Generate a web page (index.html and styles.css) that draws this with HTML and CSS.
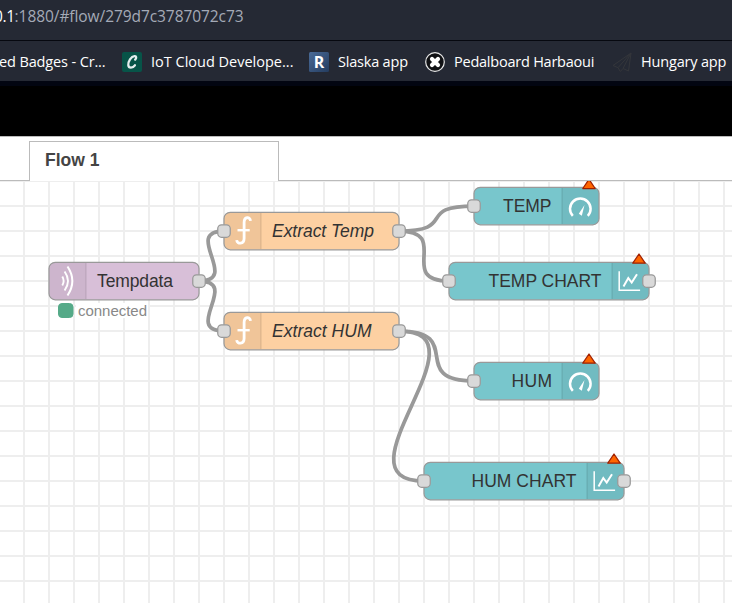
FILE: index.html
```html
<!DOCTYPE html>
<html lang="en">
<head>
<meta charset="utf-8">
<title>Node-RED</title>
<link rel="stylesheet" href="styles.css">
</head>
<body>
<div class="address"><span class="host">0.1</span><span class="path">:1880/#flow/279d7c3787072c73</span></div>
<nav class="bookmarks">
  <a class="bookmark first"><span class="name n-badges">ed Badges - Cr...</span></a>
  <a class="bookmark">
    <svg class="icon" viewBox="0 0 20 20"><rect width="20" height="20" rx="2" fill="#075448"/><path d="M13.2 7.6c1.5-1.5 1.3-3.7-.7-3.5-3.4.3-6.5 5.400-6.200 9 .3 3.400 4.500 3.200 6.600.2" fill="none" stroke="#e4eeee" stroke-width="2.300" stroke-linecap="round"/></svg>
    <span class="name n-iot">IoT Cloud Develope...</span></a>
  <a class="bookmark">
    <svg class="icon" viewBox="0 0 20 20"><defs><linearGradient id="blue" x2="1" y2="1"><stop stop-color="#4a6b98"/><stop offset="1" stop-color="#243c5f"/></linearGradient></defs><rect width="20" height="20" rx="1.500" fill="url(#blue)"/><text class="letter" x="4.800" y="16">R</text></svg>
    <span class="name n-slaska">Slaska app</span></a>
  <a class="bookmark">
    <svg class="icon" viewBox="0 0 20 20"><circle cx="10" cy="10" r="9.300" fill="#101114" stroke="#e8e8e8" stroke-width="1.200"/><path d="M7 7l6 6M13 7l-6 6" stroke="#fff" stroke-width="4.200" stroke-linecap="round"/></svg>
    <span class="name n-pedal">Pedalboard Harbaoui</span></a>
  <a class="bookmark">
    <svg class="icon" viewBox="0 0 20 20"><path d="M19 1L1 13.500l5 2.200L19 1l-2.500 18-5.500-2.500-2.700 3-2.300-3.800M11 16.500L19 1" fill="none" stroke="#34363b" stroke-width="1"/></svg>
    <span class="name n-hungary">Hungary app</span></a>
</nav>
<header class="masthead"></header>
<div class="tabs"><div class="spacer"></div><div class="tab">Flow 1</div><div class="rest"></div></div>
<main class="workspace">
<svg class="flow" viewBox="0 181 732 422">
  <defs>
    <pattern id="grid" x="23" y="180" width="25" height="25" patternUnits="userSpaceOnUse"><path d="M0 0H25V2H2V25H0Z" fill="#eee"/></pattern>
    <rect id="port" x="-6.250" y="-6.250" width="12.500" height="12.500" rx="3.750" class="port"/>
    <path id="alert" d="M0-4.700L6.200 4.500H-6.200Z" class="alert"/>
    <g id="function" class="glyph">
      <path d="M7-10.200C6.600-14.600.6-14.500.6-8.500V7.500C.6 13.400-6.400 13.400-6.800 9.200" stroke-width="2.800"/>
      <path d="M-6-.8H6.200" stroke-width="2.400"/>
    </g>
    <g id="gauge" class="glyph">
      <path d="M-7.500 8.600A10.300 10.300 0 1 1 7.500 8.600" stroke-width="2.500"/>
      <path d="M4.200-2.300L-1.500 6.500L1.500 8.400Z" class="solid"/>
    </g>
    <g id="chart" class="glyph">
      <path d="M-10.300-9.500V9.600H10.600" stroke-width="1.500"/>
      <path d="M-6 5.800L-1.200-2.600L2.200 1.800L7.500-6.500" stroke-width="2"/>
    </g>
    <g id="signal" class="glyph">
      <path d="M-3.700-4.500Q-1 0-3.700 4.500" stroke-width="1.900"/>
      <path d="M-1.400-9.500Q5.400 0-1.400 9.500" stroke-width="1.900"/>
      <path d="M1.500-14.500Q11.200 0 1.500 14.500" stroke-width="2"/>
    </g>
  </defs>
  <rect y="181" width="732" height="422" fill="url(#grid)"/>

  <g class="wires">
    <path d="M199 281C240.900 281 182.100 231 224 231"/>
    <path d="M199 281C240.900 281 182.100 331 224 331"/>
    <path d="M399 231C458.300 231 414.700 206 474 206"/>
    <path d="M399 231C452 231 396 281 449 281"/>
    <path d="M399 331C466.600 331 406.400 381 474 381"/>
    <path d="M399 331C492.750 331 330.250 481 424 481"/>
  </g>

  <g class="node mqtt">
    <rect class="body" x="49" y="262.250" width="150" height="37.500" rx="6.250"/>
    <path class="shade" d="M86 262.900V299.100H55.250A5.600 5.600 0 0 1 49.600 293.500V268.500A5.600 5.600 0 0 1 55.250 262.900Z"/><path class="divider" d="M86 263V299"/>
    <use href="#signal" x="66" y="281"/>
    <text x="97" y="287" textLength="76">Tempdata</text>
    <use href="#port" x="199" y="281"/>
    <rect class="status" x="58.500" y="303.500" width="14.500" height="14" rx="3.500"/>
    <rect x="76" y="303" width="72" height="15" fill="#fff"/>
    <text class="status-text" x="78" y="316" textLength="69">connected</text>
  </g>
  <g class="node function">
    <rect class="body" x="224" y="212.250" width="175" height="37.500" rx="6.250"/>
    <path class="shade" d="M261 212.900V249.100H230.250A5.600 5.600 0 0 1 224.600 243.500V218.500A5.600 5.600 0 0 1 230.250 212.900Z"/><path class="divider" d="M261 213V249"/>
    <use href="#function" x="243.500" y="231"/>
    <text x="272" y="237" textLength="102">Extract Temp</text>
    <use href="#port" x="224" y="231"/><use href="#port" x="399" y="231"/>
  </g>
  <g class="node function">
    <rect class="body" x="224" y="312.250" width="175" height="37.500" rx="6.250"/>
    <path class="shade" d="M261 312.900V349.100H230.250A5.600 5.600 0 0 1 224.600 343.500V318.500A5.600 5.600 0 0 1 230.250 312.900Z"/><path class="divider" d="M261 313V349"/>
    <use href="#function" x="243.500" y="331"/>
    <text x="272" y="337" textLength="99.500">Extract HUM</text>
    <use href="#port" x="224" y="331"/><use href="#port" x="399" y="331"/>
  </g>
  <g class="node ui">
    <rect class="body" x="474" y="187.250" width="125" height="37.500" rx="6.250"/>
    <path class="shade" d="M562 187.900V224.100H592.750A5.600 5.600 0 0 0 598.400 218.500V193.500A5.600 5.600 0 0 0 592.750 187.900Z"/><path class="divider" d="M562 188V224"/>
    <use href="#gauge" x="580.300" y="207.300"/>
    <text x="503" y="212" textLength="48.500">TEMP</text>
    <use href="#port" x="474" y="206"/><use href="#alert" x="589" y="184"/>
  </g>
  <g class="node ui">
    <rect class="body" x="449" y="262.250" width="200" height="37.500" rx="6.250"/>
    <path class="shade" d="M612 262.900V299.100H642.750A5.600 5.600 0 0 0 648.400 293.500V268.500A5.600 5.600 0 0 0 642.750 262.900Z"/><path class="divider" d="M612 263V299"/>
    <use href="#chart" x="629.500" y="280.700"/>
    <text x="488.500" y="287" textLength="113">TEMP CHART</text>
    <use href="#port" x="449" y="281"/><use href="#port" x="649" y="281"/><use href="#alert" x="639" y="258.700"/>
  </g>
  <g class="node ui">
    <rect class="body" x="474" y="362.250" width="125" height="37.500" rx="6.250"/>
    <path class="shade" d="M562 362.900V399.100H592.750A5.600 5.600 0 0 0 598.400 393.500V368.500A5.600 5.600 0 0 0 592.750 362.900Z"/><path class="divider" d="M562 363V399"/>
    <use href="#gauge" x="580.300" y="382.300"/>
    <text x="511.500" y="387" textLength="40.500">HUM</text>
    <use href="#port" x="474" y="381"/><use href="#alert" x="589" y="358.700"/>
  </g>
  <g class="node ui">
    <rect class="body" x="424" y="462.250" width="200" height="37.500" rx="6.250"/>
    <path class="shade" d="M587 462.900V499.100H617.750A5.600 5.600 0 0 0 623.400 493.500V468.500A5.600 5.600 0 0 0 617.750 462.900Z"/><path class="divider" d="M587 463V499"/>
    <use href="#chart" x="604.500" y="480.700"/>
    <text x="471.500" y="487" textLength="105">HUM CHART</text>
    <use href="#port" x="424" y="481"/><use href="#port" x="624" y="481"/><use href="#alert" x="614" y="458.700"/>
  </g>
</svg>
</main>
</body>
</html>
```
FILE: styles.css
```css
* { box-sizing: border-box; }
body {
  margin: 0;
  width: 732px;
  height: 603px;
  overflow: hidden;
  background: #fff;
  font-family: "Liberation Sans", sans-serif;
}
.address {
  height: 41px;
  padding-top: 4px;
  background: #252934;
  border-bottom: 1px solid #06080f;
  color: #a4aab7;
  font: 15.500px/24px "Open Sans", sans-serif;
  white-space: nowrap;
}
.host { color: #fff; margin-left: -6px; letter-spacing: -0.400px; }
.path { letter-spacing: -0.070px; }
.bookmarks {
  display: flex;
  align-items: center;
  gap: 16px;
  height: 45px;
  padding-top: 1px;
  background: #252934;
  border-bottom: 5px solid #020511;
  overflow: hidden;
}
.bookmark {
  display: flex;
  flex: none;
  align-items: center;
  gap: 9px;
  color: #fff;
  font: 14.500px/20px "Open Sans", sans-serif;
  white-space: nowrap;
}
.icon { width: 20px; height: 20px; flex: none; }
.letter { font: bold 16px "Open Sans", sans-serif; fill: #fff; }
.name { display: block; }
.n-badges { width: 107px; margin-left: -1px; letter-spacing: -0.130px; }
.n-iot { width: 142px; letter-spacing: 0; }
.n-slaska { width: 71px; letter-spacing: -0.200px; }
.n-pedal { width: 142px; letter-spacing: -0.230px; }
.n-hungary { width: 90px; letter-spacing: -0.180px; }
.masthead { height: 50px; background: #000; }
.tabs {
  display: flex;
  height: 45px;
  padding-top: 4px;
  border-top: 1px solid #bbb;
}
.spacer { width: 29px; border-bottom: 1px solid #bbb; }
.tab {
  width: 250px;
  padding-left: 15px;
  border: 1px solid #bbb;
  border-bottom: 0;
  color: #444;
  font-size: 17.500px;
  font-weight: bold;
  line-height: 36px;
}
.rest { flex: 1; border-bottom: 1px solid #bbb; }
.workspace { height: 422px; }
.flow { display: block; width: 732px; height: 422px; }
.wires path { fill: none; stroke: #999; stroke-width: 3.750; }
.body { stroke: #999; stroke-width: 1.250; }
.mqtt .body { fill: #d8bfd8; }
.function .body { fill: #fdd0a2; }
.ui .body { fill: #78c6cc; }
.shade { fill: #000; fill-opacity: 0.050; }
.divider { stroke: #000; stroke-opacity: 0.100; stroke-width: 1.250; }
.port { fill: #d9d9d9; stroke: #999; stroke-width: 1.250; }
.alert { fill: #ff6600; stroke: #a02000; stroke-width: 1.250; stroke-linejoin: round; }
.glyph { fill: none; stroke: #fff; }
.glyph .solid { fill: #fff; stroke: none; }
.node text { fill: #333; font-size: 17.500px; }
.function text { font-style: italic; }
.status { fill: #5a8; stroke: #5a8; stroke-width: 1; }
.node .status-text { fill: #888; font-size: 15px; }
```
